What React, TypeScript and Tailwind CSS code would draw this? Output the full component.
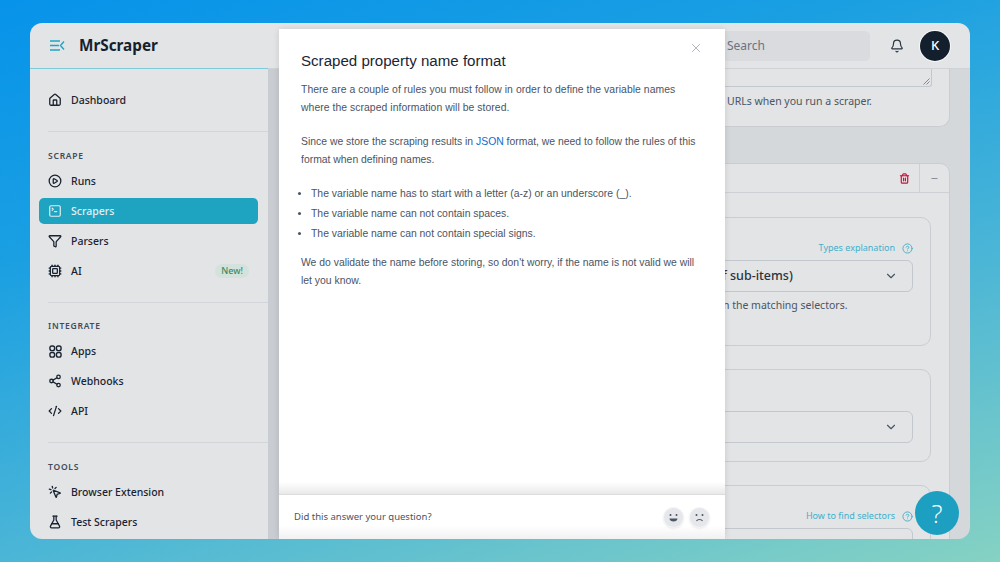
import {
  Bell,
  ChevronDown,
  CircleHelp,
  CirclePlay,
  CodeXml,
  Cpu,
  FlaskConical,
  Funnel,
  House,
  Minus,
  MousePointerClick,
  Share2,
  SquareTerminal,
  Trash2,
  X,
} from "lucide-react";
import type { ReactNode } from "react";

const AppsIcon = () => (
  <svg width="13" height="13" viewBox="0 0 14 14" fill="none" stroke="currentColor" strokeWidth="1.5">
    <rect x="1" y="1" width="5" height="5" rx="2" />
    <rect x="8" y="1" width="5" height="5" rx="2" />
    <rect x="1" y="8" width="5" height="5" rx="2" />
    <rect x="8" y="8" width="5" height="5" rx="2" />
  </svg>
);

const MenuIcon = () => (
  <svg width="15" height="11" viewBox="0 0 15 11" fill="none" stroke="#1ea5c4" strokeWidth="1.4">
    <path d="M0 1h10M0 5.5h9M0 10h10M14 1.5 10.5 5.5 14 9.5" />
  </svg>
);

const ResizeHandle = () => (
  <svg width="7" height="7" viewBox="0 0 7 7" fill="none" stroke="#6b7280" strokeWidth="0.8" className="absolute bottom-[1px] right-[1px]">
    <path d="M0.5 6.5 6.5 0.5M3.5 6.5 6.5 3.5" />
  </svg>
);

interface NavItemProps {
  icon: ReactNode;
  label: string;
  active?: boolean;
  badge?: string;
}

const NavItem = ({ icon, label, active, badge }: NavItemProps) => (
  <div
    className={`flex h-[26px] items-center rounded-[5px] pl-[9px] pr-[9px] mb-1 ${
      active ? "bg-[#1ea3c1] text-[#e6eef1]" : "text-[#1a2331]"
    }`}
  >
    <span className="flex w-[14px] justify-center">{icon}</span>
    <span className="ml-[9px] pt-[2px] text-[10.5px] font-medium">{label}</span>
    {badge && (
      <span className="ml-auto rounded-full bg-[#d3e3dc] px-[6px] py-[1px] text-[9px] leading-[12px] font-medium text-[#3d8a5f]">
        {badge}
      </span>
    )}
  </div>
);

const SectionTitle = ({ children }: { children: ReactNode }) => (
  <div className="mb-[6px] ml-[9px] text-[8.5px] leading-[12px] font-semibold tracking-[0.09em] text-[#414b5a]">
    {children}
  </div>
);

const Sidebar = () => (
  <aside className="flex w-[238px] shrink-0 flex-col bg-[#e2e4e6] [font-family:'Noto_Sans',sans-serif]">
    <div className="flex h-[46px] shrink-0 items-center border-b border-[#7fcbdc] pl-[20px]">
      <MenuIcon />
      <span className="ml-[14px] text-[15.3px] font-bold text-[#161f2e]">MrScraper</span>
    </div>
    <div className="pl-[9px] pr-[10px] pt-[18px]">
      <NavItem icon={<House size={14} strokeWidth={2.2} />} label="Dashboard" />
    </div>
    <div className="ml-[18px] mt-[14px] border-t border-[#d2d5d9]" />
    <div className="pl-[9px] pr-[10px] pt-[18px]">
      <SectionTitle>SCRAPE</SectionTitle>
      <NavItem icon={<CirclePlay size={14} strokeWidth={2.2} />} label="Runs" />
      <NavItem active icon={<SquareTerminal size={14} strokeWidth={2} />} label="Scrapers" />
      <NavItem icon={<Funnel size={14} strokeWidth={2.2} />} label="Parsers" />
      <NavItem icon={<Cpu size={14} strokeWidth={2.2} />} label="AI" badge="New!" />
    </div>
    <div className="ml-[18px] mt-[14px] border-t border-[#d2d5d9]" />
    <div className="pl-[9px] pr-[10px] pt-[17px]">
      <SectionTitle>INTEGRATE</SectionTitle>
      <NavItem icon={<AppsIcon />} label="Apps" />
      <NavItem icon={<Share2 size={14} strokeWidth={2.2} />} label="Webhooks" />
      <NavItem icon={<CodeXml size={14} strokeWidth={2.2} />} label="API" />
    </div>
    <div className="ml-[18px] mt-[14px] border-t border-[#d2d5d9]" />
    <div className="pl-[9px] pr-[10px] pt-[18px]">
      <SectionTitle>TOOLS</SectionTitle>
      <NavItem icon={<MousePointerClick size={14} strokeWidth={2.2} />} label="Browser Extension" />
      <NavItem icon={<FlaskConical size={14} strokeWidth={2.2} />} label="Test Scrapers" />
    </div>
  </aside>
);

const Header = () => (
  <header className="flex h-[46px] shrink-0 items-center border-b border-[#cfd2d6] bg-[#e2e4e6] pr-[20px] [font-family:'Noto_Sans',sans-serif]">
    <div className="ml-auto flex h-[30px] w-[170px] items-center rounded-[5px] bg-[#d9dbde] pl-[27px] text-[12px] text-[#6b7280]">
      Search
    </div>
    <Bell size={14} className="ml-[20px] text-[#2a3340]" />
    <div className="ml-[16px] flex h-[30px] w-[30px] items-center justify-center rounded-full bg-[#141f2e] text-[13px] font-medium text-white ring-1 ring-white/70">
      K
    </div>
  </header>
);

const HintLink = ({ label }: { label: string }) => (
  <div className="flex items-center justify-end gap-[7px] text-[9px] leading-[14px] text-[#3fb0cb]">
    {label}
    <CircleHelp size={11} />
  </div>
);

const SelectBox = ({ text, className }: { text?: string; className: string }) => (
  <div className={`flex items-center rounded-[6px] border border-[#c3c8cf] pl-[281px] pr-[14px] ${className}`}>
    <span className="whitespace-nowrap text-[12.5px] font-medium text-[#2a3340]">{text}</span>
    <ChevronDown size={14} className="ml-auto text-[#4b5563]" />
  </div>
);

const Content = () => (
  <div className="flex min-h-0 flex-1 bg-[#d5d8db]">
    <div className="w-[11px] shrink-0 bg-[#c9ccd0]" />
    <div className="min-w-0 flex-1 overflow-hidden pl-[21px] pr-[20px] [font-family:'Noto_Sans',sans-serif]">
      <div className="h-[58px] rounded-b-[10px] border border-t-0 border-[#c9cdd2] bg-[#e2e4e6] pr-[17px]">
        <div className="relative h-[18px] rounded-b-[3px] border-b border-r border-[#c3c8cf]">
          <ResizeHandle />
        </div>
        <div className="mt-[6px] pl-[426px] text-[10.5px] leading-[16px] text-[#4b5563]">
          URLs when you run a scraper.
        </div>
      </div>
      <div className="mt-[36px] h-[400px] rounded-t-[10px] border border-[#c9cdd2] bg-[#e2e4e6]">
        <div className="flex h-[29px] items-center justify-end border-b border-[#cdd0d5]">
          <Trash2 size={11} strokeWidth={2.6} className="mr-[9px] text-[#d0103a]" />
          <div className="flex h-full w-[30px] items-center justify-center border-l border-[#cdd0d5] text-[#6b7280]">
            <Minus size={9} />
          </div>
        </div>
        <div className="pl-[17px] pr-[18px] pt-[24px]">
          <div className="h-[129px] rounded-[10px] border border-[#c9cdd2] pr-[17px] pt-[23px]">
            <HintLink label="Types explanation" />
            <SelectBox text="Multiple items (list of sub-items)" className="mt-[5px] h-[32px]" />
            <div className="mt-[5px] whitespace-nowrap pl-[334px] text-[10.5px] leading-[16px] text-[#4b5563]">
              the elements in the matching selectors.
            </div>
          </div>
          <div className="mt-[23px] h-[93px] rounded-[10px] border border-[#c9cdd2] pr-[17px] pt-[41px]">
            <SelectBox className="h-[32px]" />
          </div>
          <div className="mt-[23px] h-[80px] rounded-t-[10px] border border-[#c9cdd2] pr-[17px] pt-[23px]">
            <HintLink label="How to find selectors" />
            <div className="mt-[5px] h-[40px] rounded-[6px] border border-[#c3c8cf]" />
          </div>
        </div>
      </div>
    </div>
  </div>
);

const Smiley = ({ sad }: { sad?: boolean }) => (
  <div className="flex h-[19px] w-[19px] items-center justify-center rounded-full bg-[#e5e7eb] shadow-[0_0_0_1px_#f3f4f6,0_1px_3px_rgba(0,0,0,0.15)]">
    <svg width="13" height="13" viewBox="0 0 13 13" fill="#4b5563" stroke="none">
      <circle cx="3.5" cy="4" r="1" />
      <circle cx="9.5" cy="4" r="1" />
      {sad ? (
        <path d="M3.5 10c1-2 5-2 6 0" fill="none" stroke="#4b5563" strokeWidth="1.1" />
      ) : (
        <path d="M2.5 7.5h8c0 2-2 3-4 3s-4-1-4-3z" />
      )}
    </svg>
  </div>
);

const HelpModal = () => (
  <div className="absolute bottom-0 left-[249px] top-[6px] flex w-[446px] flex-col rounded-t-[4px] bg-white shadow-[0_0_6px_rgba(0,0,0,0.12)] [font-family:'Liberation_Sans',sans-serif]">
    <div className="relative min-h-0 flex-1 bg-[linear-gradient(to_top,#e9e9e9,#ffffff_12px)] px-[22px] pt-[21px] text-[10.4px] leading-[18px] text-[#4a5464]">
      <X size={14} strokeWidth={1.2} className="absolute right-[22px] top-[12px] text-[#8d96a3]" />
      <h1 className="mb-[9px] text-[15.1px] leading-[22px] text-[#1b2533]">Scraped property name format</h1>
      <p className="tracking-[0.05px]">
        There are a couple of rules you must follow in order to define the variable names
        <br />
        where the scraped information will be stored.
      </p>
      <p className="mt-[16px]">
        Since we store the scraping results in <span className="text-[#0a6fd0]">JSON</span> format, we need to follow
        the rules of this format when defining names.
      </p>
      <ul className="mt-[16px] list-disc pl-[10px]">
        <li className="mb-[2px]">The variable name has to start with a letter (a-z) or an underscore (_).</li>
        <li className="mb-[2px]">The variable name can not contain spaces.</li>
        <li>The variable name can not contain special signs.</li>
      </ul>
      <p className="mt-[11px]">
        We do validate the name before storing, so don't worry, if the name is not valid we will let you know.
      </p>
    </div>
    <div className="flex h-[45px] shrink-0 items-center border-t border-[#dcdcdc] bg-[linear-gradient(to_bottom,#ffffff_70%,#f1f1f1)] pl-[15px] pr-[16px]">
      <span className="text-[9.5px] text-[#4a5464] [font-family:'Noto_Sans',sans-serif]">
        Did this answer your question?
      </span>
      <div className="ml-auto flex gap-[7px]">
        <Smiley />
        <Smiley sad />
      </div>
    </div>
  </div>
);

const App = () => (
  <div className="h-[562px] w-[1000px] overflow-hidden bg-[linear-gradient(163deg,#0793ea_0%,#1a9fe2_30%,#4cb6d6_65%,#86d2c3_100%)] px-[30px] pt-[23px]">
    <div className="relative flex h-[516px] overflow-hidden rounded-[12px]">
      <Sidebar />
      <main className="flex min-w-0 flex-1 flex-col">
        <Header />
        <Content />
      </main>
      <HelpModal />
      <button className="absolute bottom-[4px] right-[11px] flex h-[44px] w-[44px] items-center justify-center rounded-full bg-[#1c9fc0] text-[26px] font-light text-white [font-family:'Open_Sans',sans-serif]">
        ?
      </button>
    </div>
  </div>
);

export default App;
